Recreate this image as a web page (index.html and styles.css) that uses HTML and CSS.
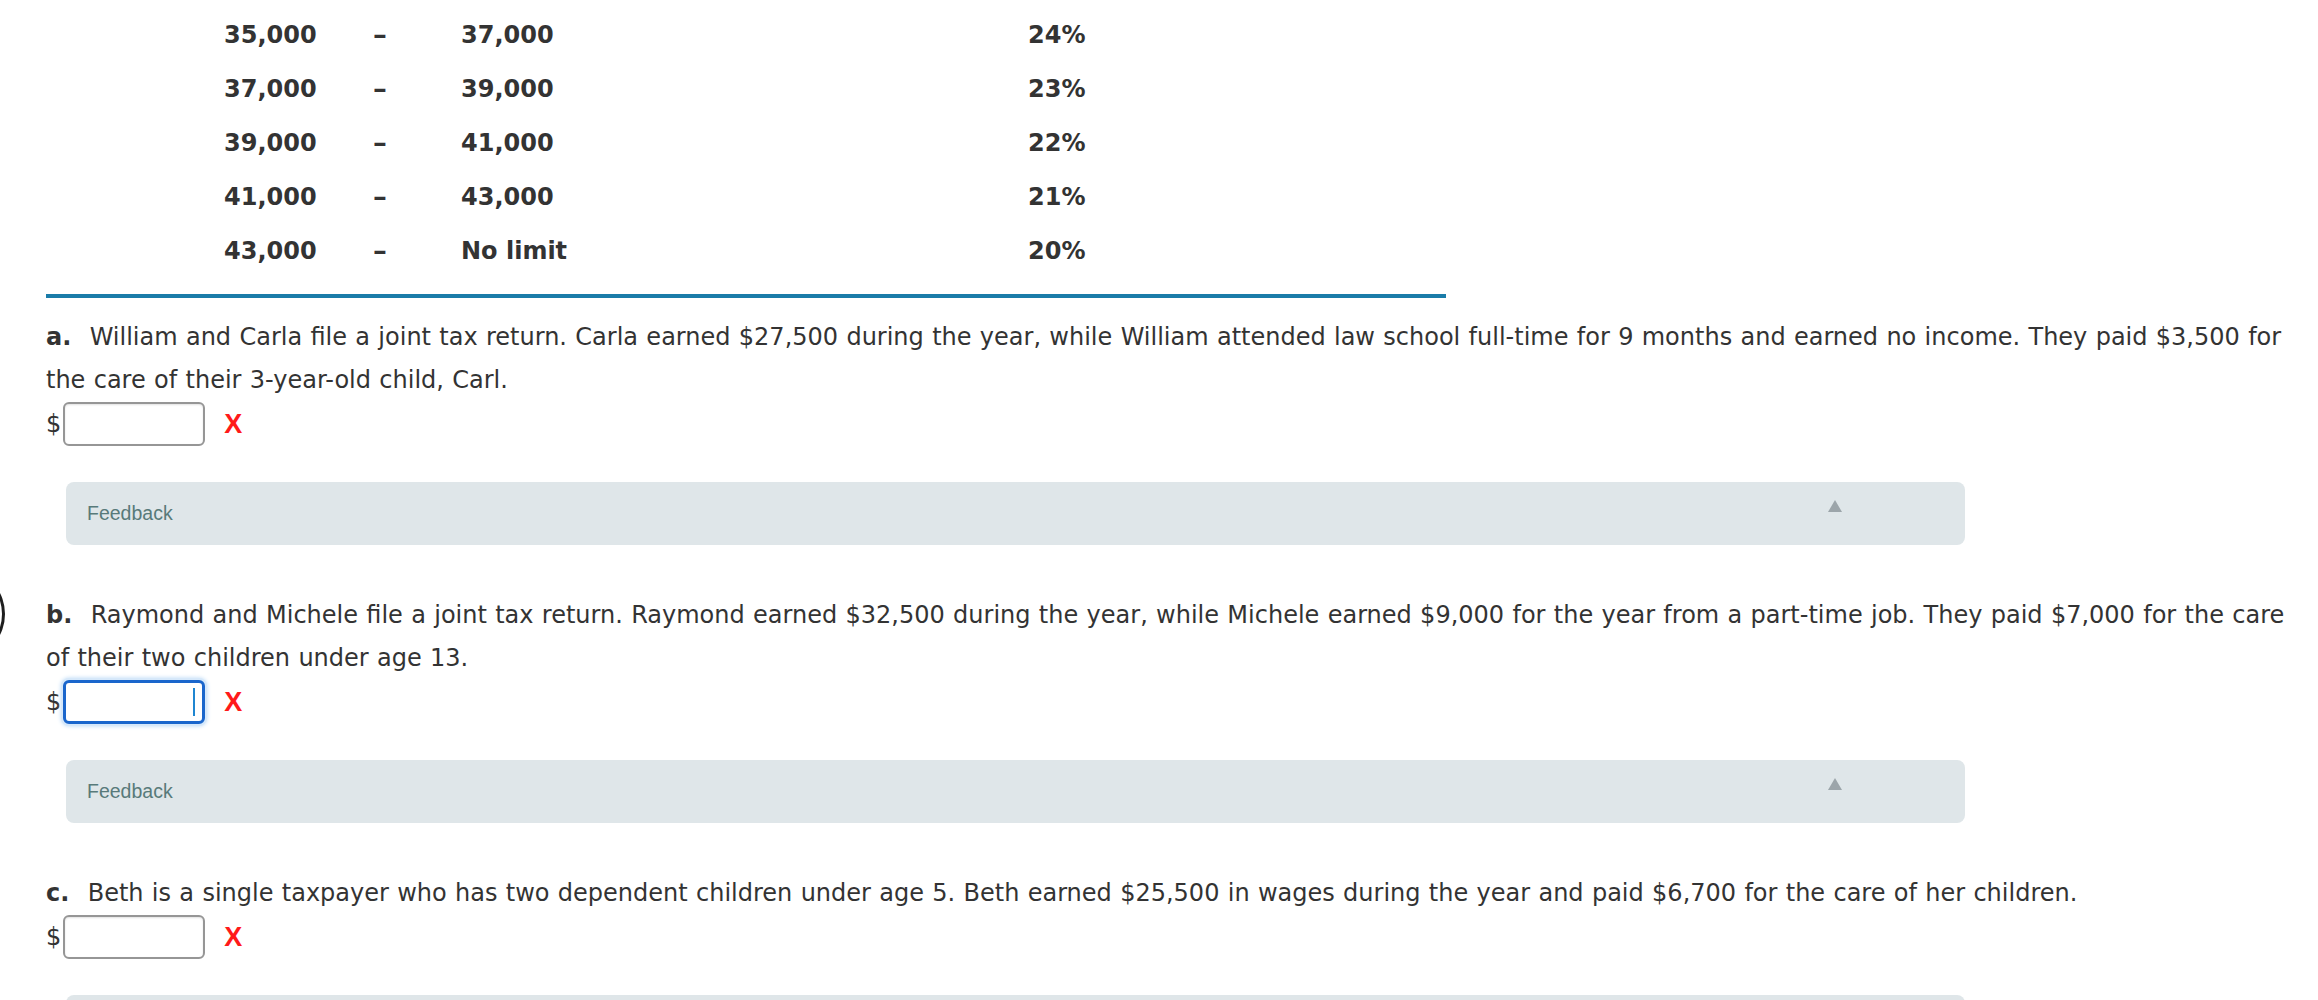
FILE: index.html
```html
<!DOCTYPE html>
<html lang="en">
<head>
<meta charset="utf-8">
<title>Child and dependent care credit</title>
<link rel="stylesheet" href="styles.css">
</head>
<body>
<div class="page">
  <div class="rates">
    <span class="low">35,000</span><span class="dash">–</span><span class="high">37,000</span><span class="pct">24%</span>
    <span class="low">37,000</span><span class="dash">–</span><span class="high">39,000</span><span class="pct">23%</span>
    <span class="low">39,000</span><span class="dash">–</span><span class="high">41,000</span><span class="pct">22%</span>
    <span class="low">41,000</span><span class="dash">–</span><span class="high">43,000</span><span class="pct">21%</span>
    <span class="low">43,000</span><span class="dash">–</span><span class="high">No limit</span><span class="pct">20%</span>
  </div>
  <div class="rule"></div>

  <section class="question">
    <p class="prompt"><b class="label">a.</b> William and Carla file a joint tax return. Carla earned $27,500 during the year, while William attended law school full-time for 9 months and earned no income. They paid $3,500 for the care of their 3-year-old child, Carl.</p>
    <div class="answer">
      <span class="currency">$</span>
      <span class="field"><input class="amount" type="text" aria-label="Credit amount a"></span>
      <span class="wrong">X</span>
    </div>
    <div class="feedback"><span class="fb-text">Feedback</span><span class="toggle"></span></div>
  </section>

  <section class="question">
    <span class="marker"></span>
    <p class="prompt"><b class="label">b.</b> Raymond and Michele file a joint tax return. Raymond earned $32,500 during the year, while Michele earned $9,000 for the year from a part-time job. They paid $7,000 for the care of their two children under age 13.</p>
    <div class="answer">
      <span class="currency">$</span>
      <span class="field"><input class="amount focused" type="text" aria-label="Credit amount b"><span class="caret"></span></span>
      <span class="wrong">X</span>
    </div>
    <div class="feedback"><span class="fb-text">Feedback</span><span class="toggle"></span></div>
  </section>

  <section class="question">
    <p class="prompt"><b class="label">c.</b> Beth is a single taxpayer who has two dependent children under age 5. Beth earned $25,500 in wages during the year and paid $6,700 for the care of her children.</p>
    <div class="answer">
      <span class="currency">$</span>
      <span class="field"><input class="amount" type="text" aria-label="Credit amount c"></span>
      <span class="wrong">X</span>
    </div>
    <div class="feedback"><span class="fb-text">Feedback</span><span class="toggle"></span></div>
  </section>
</div>
</body>
</html>
```

FILE: styles.css
```css
html, body {
  margin: 0;
  padding: 0;
  background: #ffffff;
}

body {
  font-family: "DejaVu Sans", Verdana, sans-serif;
  color: #333333;
  font-size: 24px;
  overflow: hidden;
}

.page {
  position: relative;
  padding: 8px 0 0 46px;
  width: 2254px;
}

.rates {
  display: grid;
  grid-template-columns: 149px 88px 567px auto;
  grid-auto-rows: 54px;
  margin-left: 178px;
  font-weight: bold;
  line-height: 54px;
  color: #333333;
}

.dash {
  display: inline-block;
  transform: scaleX(1.15);
  transform-origin: left center;
}

.rule {
  width: 1400px;
  height: 4px;
  background: #1a7ca9;
  margin-top: 16px;
}

.question {
  position: relative;
  padding-top: 18px;
}

.question + .question {
  padding-top: 49px;
}

.prompt {
  margin: 0;
  line-height: 43px;
  word-spacing: 0.7px;
}

.label {
  margin-right: 10px;
}

.answer {
  display: flex;
  align-items: center;
  height: 44px;
}

.currency {
  margin-right: 2px;
}

.field {
  position: relative;
  display: inline-block;
  height: 44px;
}

.amount {
  box-sizing: border-box;
  width: 142px;
  height: 44px;
  margin: 0;
  border: 2px solid #969696;
  border-radius: 6px;
  background: #ffffff;
  box-shadow: inset 0 1px 2px rgba(0, 0, 0, 0.12);
  font: inherit;
  outline: none;
}

.amount.focused {
  border: 3px solid #1a66cc;
  box-shadow: 0 0 0 2px #d6e8fa, 0 0 4px 2px #b9d8f5;
}

.caret {
  position: absolute;
  left: 130px;
  top: 8px;
  width: 2px;
  height: 28px;
  background: #1f86d1;
}

.wrong {
  margin-left: 19px;
  font-family: "Liberation Sans", Arial, sans-serif;
  font-weight: bold;
  font-size: 27px;
  color: #ff1a1a;
  line-height: 1;
}

.feedback {
  position: relative;
  box-sizing: border-box;
  width: 1899px;
  height: 63px;
  margin: 36px 0 0 20px;
  padding-left: 21px;
  border-radius: 8px;
  background: #dfe6e9;
  font-family: "Liberation Sans", Arial, sans-serif;
  font-size: 19.5px;
  line-height: 63px;
  color: #587a7a;
}

.toggle {
  position: absolute;
  right: 123px;
  top: 18px;
  width: 0;
  height: 0;
  border-left: 7px solid transparent;
  border-right: 7px solid transparent;
  border-bottom: 12px solid #9ca5aa;
}

.marker {
  position: absolute;
  left: -108px;
  top: 29px;
  width: 61px;
  height: 74px;
  border: 3px solid #1e1e1e;
  border-radius: 50%;
}
```
